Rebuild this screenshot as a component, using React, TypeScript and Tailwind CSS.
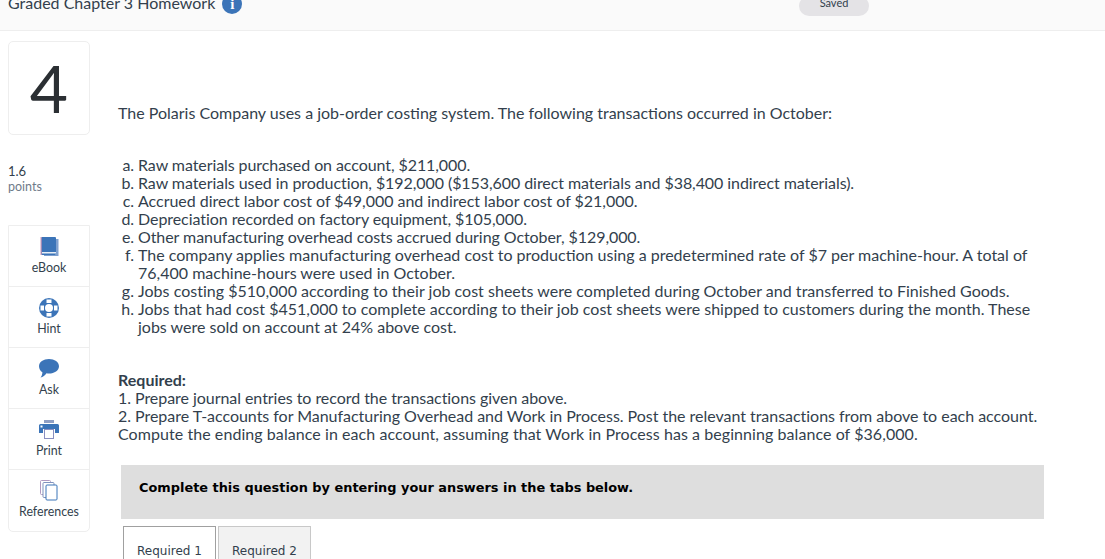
const tools = [
  { label: 'eBook', icon: <BookIcon /> },
  { label: 'Hint', icon: <HintIcon /> },
  { label: 'Ask', icon: <AskIcon /> },
  { label: 'Print', icon: <PrintIcon /> },
  { label: 'References', icon: <RefIcon /> },
]

const items = [
  { k: 'a.', t: 'Raw materials purchased on account, $211,000.', c: 'tracking-[-0.08px]' },
  { k: 'b.', t: 'Raw materials used in production, $192,000 ($153,600 direct materials and $38,400 indirect materials).', c: 'tracking-[-0.07px]' },
  { k: 'c.', t: 'Accrued direct labor cost of $49,000 and indirect labor cost of $21,000.', c: 'tracking-[-0.03px]' },
  { k: 'd.', t: 'Depreciation recorded on factory equipment, $105,000.', c: 'tracking-[-0.06px]' },
  { k: 'e.', t: 'Other manufacturing overhead costs accrued during October, $129,000.', c: 'tracking-[-0.07px]' },
  { k: 'f.', t: 'The company applies manufacturing overhead cost to production using a predetermined rate of $7 per machine-hour. A total of 76,400 machine-hours were used in October.', c: '' },
  { k: 'g.', t: 'Jobs costing $510,000 according to their job cost sheets were completed during October and transferred to Finished Goods.', c: 'tracking-[0.02px]' },
  { k: 'h.', t: 'Jobs that had cost $451,000 to complete according to their job cost sheets were shipped to customers during the month. These jobs were sold on account at 24% above cost.', c: '' },
]

function BookIcon() {
  return (
    <svg width="19" height="20" viewBox="0 0 19 20">
      <path d="M16 2h2.500v17H4v-1h12z" fill="#7fa0cf" />
      <rect x="1" y="0" width="15" height="18" rx="1" fill="#3b74b8" />
      <rect x="2" y="15" width="14" height="1.500" fill="#e8eef6" />
      <rect x="0.500" y="0" width="1.200" height="18" fill="#c795b5" />
    </svg>
  )
}

function HintIcon() {
  return (
    <svg width="20" height="20" viewBox="0 0 20 20">
      <circle cx="10" cy="10" r="10" fill="#3b74b8" />
      <circle cx="10" cy="10" r="4" fill="#fff" />
      <path d="M7.500 1.500h5v3.500h-5zM7.500 15h5v3.500h-5zM1.500 7.500H5v5H1.500zM15 7.500h3.500v5H15z" fill="#fff" />
    </svg>
  )
}

function AskIcon() {
  return (
    <svg width="20" height="19" viewBox="0 0 20 19">
      <path d="M10 0c5.500 0 10 3 10 7.200s-4.500 7.300-10 7.300c-.9 0-1.700-.1-2.500-.2C6 16.500 4 18 1.500 18.500c1.200-1.400 1.800-3 1.900-5.300C1.300 12 0 9.800 0 7.200 0 3 4.500 0 10 0z" fill="#3b74b8" />
    </svg>
  )
}

function PrintIcon() {
  return (
    <svg width="20" height="19" viewBox="0 0 20 19">
      <rect x="5" y="0" width="10" height="3" fill="#8f9fc4" />
      <path d="M1.500 4h17A1.500 1.500 0 0 1 20 5.500V13h-4V9H4v4H0V5.500A1.500 1.500 0 0 1 1.500 4z" fill="#3b74b8" />
      <rect x="1.500" y="5.500" width="2" height="2" fill="#fff" />
      <rect x="5.500" y="9.500" width="9" height="9" fill="#fff" stroke="#8a8fc0" />
    </svg>
  )
}

function RefIcon() {
  return (
    <svg width="18" height="21" viewBox="0 0 18 21">
      <rect x="0.500" y="0.500" width="10" height="14" rx="1" fill="#fff" stroke="#b09ac0" />
      <rect x="3" y="2.500" width="11" height="15" rx="1" fill="#fff" stroke="#7f93bd" />
      <rect x="6" y="5" width="11" height="15" rx="1" fill="#fff" stroke="#3b74b8" />
    </svg>
  )
}

export default function App() {
  return (
    <div className="w-[1105px] h-[559px] overflow-hidden bg-white text-[#333f4d] font-['Lato','Liberation_Sans',sans-serif]">
      <header className="h-[31px] bg-[#fafafa] border-b border-[#eeeeee] flex items-start overflow-hidden">
        <div className="ml-[8px] -mt-[8px] flex items-start gap-[7px] text-[16px] leading-[20px]">
          <span className="mt-[1px]">Graded Chapter 3 Homework</span>
          <span className="mt-[2px] w-[20px] h-[20px] rounded-full bg-[#3b74b8] text-white text-[15px] font-bold flex items-center justify-center font-['Liberation_Serif',serif]">i</span>
        </div>
        <div className="ml-auto mr-[236px] -mt-[4px] w-[70px] h-[20px] rounded-[10px] bg-[#e4e3e6] text-[11px] leading-[14px] flex items-start justify-center">
          Saved
        </div>
      </header>

      <div className="flex">
        <aside className="w-[82px] ml-[8px] pt-[10px] shrink-0">
          <div className="h-[94px] border border-[#eeeeee] rounded-[5px] flex items-center justify-center text-[66px] text-[#2b2f33] leading-none">4</div>
          <div className="mt-[29px] text-[13px] leading-[15px]">1.6</div>
          <div className="text-[12.5px] leading-[15px] text-[#6f7b8a]">points</div>
          <div className="mt-[31px] border border-[#eeeeee] rounded-b-[5px]">
            {tools.map(tool => (
              <div key={tool.label} className="h-[61px] border-b last:border-b-0 border-[#eeeeee] flex flex-col items-center pt-[10px]">
                <div className="h-[21px] flex items-center">{tool.icon}</div>
                <div className="text-[12.4px] leading-[14px] mt-[4px]">{tool.label}</div>
              </div>
            ))}
          </div>
        </aside>

        <main className="ml-[28px] w-[930px] pt-[73px] text-[16px] leading-[18px]">
          <p>The Polaris Company uses a job-order costing system. The following transactions occurred in October:</p>
          <ol className="mt-[34px]">
            {items.map(item => (
              <li key={item.k} className={`flex ${item.c}`}>
                <span className="w-[16px] shrink-0 text-right mr-[4px]">{item.k}</span>
                <span className="w-[900px]">{item.t}</span>
              </li>
            ))}
          </ol>
          <div className="mt-[35px]">
            <div className="font-bold">Required:</div>
            <div className="tracking-[-0.05px]">1. Prepare journal entries to record the transactions given above.</div>
            <div className="tracking-[-0.03px]">2. Prepare T-accounts for Manufacturing Overhead and Work in Process. Post the relevant transactions from above to each account.</div>
            <div className="tracking-[0.065px]">Compute the ending balance in each account, assuming that Work in Process has a beginning balance of $36,000.</div>
          </div>
          <div className="mt-[22px] ml-[3px] w-[923px] h-[54px] bg-[#dedede] pt-[15px] pl-[18px] font-['DejaVu_Sans',sans-serif] font-bold text-[12.9px] leading-[16px] text-black">
            Complete this question by entering your answers in the tabs below.
          </div>
          <div className="mt-[7px] ml-[5px] flex gap-[2px] font-['DejaVu_Sans',sans-serif] text-[12px]">
            <div className="w-[93px] h-[40px] border border-[#a0a0a0] border-b-0 bg-white pt-[15px] text-center">Required 1</div>
            <div className="w-[93px] h-[40px] border border-[#c8c8c8] border-b-0 bg-[#f2f2f2] pt-[15px] text-center">Required 2</div>
          </div>
        </main>
      </div>
    </div>
  )
}
